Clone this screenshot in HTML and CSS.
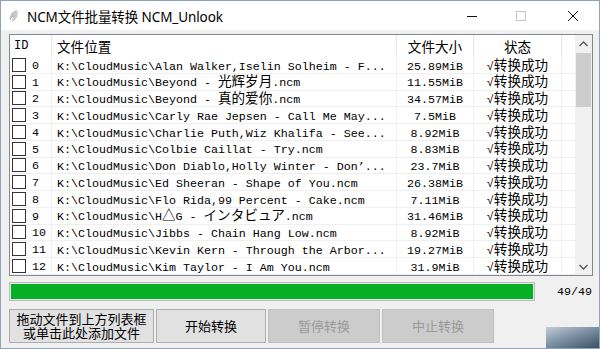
FILE: index.html
```html
<!DOCTYPE html>
<html lang="zh-CN">
<head>
    <meta charset="UTF-8">
    <title>NCM文件批量转换 NCM_Unlook</title>
    <link rel="stylesheet" href="styles.css">
</head>
<body>
    <div class="window">
        <div class="titlebar">
            <svg class="app-icon" width="12" height="14" viewBox="0 0 12 14">
                <path d="M9 1 C4 2 1 6 2 11 C3 8 5 7 7 7 C5 8 4 10 4 13 C8 11 11 7 9 1 Z" fill="#c9c9c9"/>
                <path d="M2 11 C3 8 5 7 7 7" stroke="#9a9a9a" stroke-width="0.8" fill="none"/>
            </svg>
            <span class="title">NCM文件批量转换 NCM_Unlook</span>
            <div class="controls">
                <span class="ctl"><svg width="10" height="10" viewBox="0 0 10 10"><path d="M0 5.5 H10" stroke="#111" stroke-width="1"/></svg></span>
                <span class="ctl"><svg width="10" height="10" viewBox="0 0 10 10"><rect x="0.5" y="0.5" width="9" height="9" fill="none" stroke="#c4c4c4" stroke-width="1"/></svg></span>
                <span class="ctl"><svg width="10" height="10" viewBox="0 0 10 10"><path d="M0 0 L10 10 M10 0 L0 10" stroke="#111" stroke-width="1"/></svg></span>
            </div>
        </div>

        <div class="client">
            <div class="listbox">
                <div class="list-main">
                    <div class="list-head">
                        <div class="hcell c-id mono">ID</div>
                        <div class="hcell c-path">文件位置</div>
                        <div class="hcell c-size">文件大小</div>
                        <div class="hcell c-state">状态</div>
                        <div class="hcell c-fill"></div>
                    </div>
                    <div class="list-body" id="rows"></div>
                </div>
                <div class="scrollbar">
                    <div class="sb-btn">
                        <svg width="9" height="6" viewBox="0 0 9 6"><path d="M0.5 5 L4.5 1 L8.5 5" stroke="#555" stroke-width="1.3" fill="none"/></svg>
                    </div>
                    <div class="sb-track"><div class="sb-thumb"></div></div>
                    <div class="sb-btn">
                        <svg width="9" height="6" viewBox="0 0 9 6"><path d="M0.5 1 L4.5 5 L8.5 1" stroke="#555" stroke-width="1.3" fill="none"/></svg>
                    </div>
                </div>
            </div>

            <div class="progress-row">
                <div class="progress"><div class="progress-fill" style="width: 100%"></div></div>
                <span class="count mono">49/49</span>
            </div>

            <div class="buttons">
                <button class="btn btn-add">拖动文件到上方列表框<br>或单击此处添加文件</button>
                <button class="btn btn-start">开始转换</button>
                <button class="btn btn-pause" disabled>暂停转换</button>
                <button class="btn btn-stop" disabled>中止转换</button>
            </div>
        </div>

        <div class="corner-shade"></div>
    </div>

    <script>
        // Converted files shown in the list
        const files = [
            ['K:\\CloudMusic\\Alan Walker,Iselin Solheim - F...', '25.89MiB'],
            ['K:\\CloudMusic\\Beyond - 光辉岁月.ncm', '11.55MiB'],
            ['K:\\CloudMusic\\Beyond - 真的爱你.ncm', '34.57MiB'],
            ['K:\\CloudMusic\\Carly Rae Jepsen - Call Me May...', '7.5MiB'],
            ['K:\\CloudMusic\\Charlie Puth,Wiz Khalifa - See...', '8.92MiB'],
            ['K:\\CloudMusic\\Colbie Caillat - Try.ncm', '8.83MiB'],
            ['K:\\CloudMusic\\Don Diablo,Holly Winter - Don’...', '23.7MiB'],
            ['K:\\CloudMusic\\Ed Sheeran - Shape of You.ncm', '26.38MiB'],
            ['K:\\CloudMusic\\Flo Rida,99 Percent - Cake.ncm', '7.11MiB'],
            ['K:\\CloudMusic\\H△G - インタビュア.ncm', '31.46MiB'],
            ['K:\\CloudMusic\\Jibbs - Chain Hang Low.ncm', '8.92MiB'],
            ['K:\\CloudMusic\\Kevin Kern - Through the Arbor...', '19.27MiB'],
            ['K:\\CloudMusic\\Kim Taylor - I Am You.ncm', '31.9MiB']
        ];

        // Wide (double-width) characters get their own font size
        function wide(text) {
            return text.replace(/([\u25b3\u3000-\u9fff\uff00-\uffef]+)/g, '<span class="cj">$1</span>');
        }

        const body = document.getElementById('rows');
        files.forEach(([path, size], i) => {
            const row = document.createElement('div');
            row.className = 'row';
            row.innerHTML = `
                <div class="cell c-id"><span class="check"></span><span class="mono">${i}</span></div>
                <div class="cell c-path mono">${wide(path)}</div>
                <div class="cell c-size mono">${size}</div>
                <div class="cell c-state mono">√${wide('转换成功')}</div>
                <div class="cell c-fill"></div>
            `;
            body.appendChild(row);
        });
    </script>
</body>
</html>
```

FILE: styles.css
```css
* {
    margin: 0;
    padding: 0;
    box-sizing: border-box;
}

body {
    width: 600px;
    height: 349px;
    overflow: hidden;
    background: #f0f0f0;
    font-family: "Noto Sans CJK SC", "Noto Sans", sans-serif;
    color: #000;
}

.window {
    position: relative;
    width: 600px;
    height: 349px;
    border: 1px solid #8fa3b6;
    background: #f0f0f0;
    display: flex;
    flex-direction: column;
}

/* title bar */
.titlebar {
    height: 29px;
    flex-shrink: 0;
    background: #fff;
    display: flex;
    align-items: center;
    padding-left: 7px;
}

.app-icon {
    margin-right: 7px;
}

.title {
    font-family: "Noto Sans", "Noto Sans CJK SC", sans-serif;
    font-size: 13.5px;
    letter-spacing: -0.1px;
}

.controls {
    margin-left: auto;
    display: flex;
    height: 100%;
}

.ctl {
    width: 52px;
    display: flex;
    align-items: center;
    justify-content: center;
}

.ctl:first-child {
    width: 46px;
}

/* client area */
.client {
    flex: 1;
    padding: 4px 6px 5px 8px;
    display: flex;
    flex-direction: column;
}

.mono {
    font-family: "Liberation Mono", monospace;
    font-size: 11.67px;
}

.cj {
    font-family: "Noto Sans CJK SC", "Noto Sans CJK JP", sans-serif;
    font-size: 13.6px;
    line-height: 7px;
}

.listbox {
    height: 242px;
    border: 1px solid #828790;
    background: #fff;
    display: flex;
}

.list-main {
    flex: 1;
    overflow: hidden;
}

.list-head,
.row {
    display: grid;
    grid-template-columns: 42px 345px 77px 88px 1fr;
}

.list-head {
    height: 22px;
    font-size: 13.6px;
}

.hcell {
    display: flex;
    align-items: center;
    justify-content: center;
    border-right: 1px solid #e5e5e5;
}

.hcell.c-id,
.hcell.c-path {
    justify-content: flex-start;
}

.hcell.c-id {
    padding-left: 4px;
    font-size: 12px;
}

.hcell.c-path {
    padding-left: 5px;
}

.hcell.c-fill {
    border-right: none;
}

.row {
    height: 16.75px;
    border-bottom: 1px solid #f0f0f0;
}

.cell {
    white-space: nowrap;
    overflow: hidden;
    line-height: 12.25px;
    padding-top: 3.5px;
    border-right: 1px solid #f0f0f0;
}

.cell.c-id {
    display: flex;
    align-items: center;
    padding: 0 0 0 2px;
    gap: 6px;
}

.cell.c-id .mono {
    padding-top: 2px;
}

.cell.c-path {
    padding-left: 5px;
}

.cell.c-size,
.cell.c-state {
    text-align: center;
}

.cell.c-fill {
    border-right: none;
}

.check {
    width: 14px;
    height: 14px;
    border: 1px solid #333;
    background: #fff;
    flex-shrink: 0;
}

/* vertical scrollbar */
.scrollbar {
    width: 17px;
    background: #f0f0f0;
    display: flex;
    flex-direction: column;
}

.sb-btn {
    height: 17px;
    display: flex;
    align-items: center;
    justify-content: center;
}

.sb-track {
    flex: 1;
    padding: 1px 1px;
}

.sb-thumb {
    height: 54px;
    background: #cdcdcd;
}

/* progress */
.progress-row {
    margin-top: 6px;
    display: flex;
    align-items: center;
}

.progress {
    width: 526px;
    height: 19px;
    border: 1px solid #bcbcbc;
    background: #e6e6e6;
    padding: 1px;
}

.progress-fill {
    height: 100%;
    background: #06b025;
}

.count {
    margin-left: auto;
    padding-right: 1px;
}

/* buttons */
.buttons {
    margin-top: 8px;
    display: flex;
    gap: 2px;
}

.btn {
    height: 34px;
    border: 1px solid #adadad;
    background: #e1e1e1;
    font-family: "Noto Sans CJK SC", sans-serif;
    font-size: 13px;
    line-height: 14.5px;
    color: #000;
}

.btn-add {
    width: 145px;
}

.btn-start {
    width: 110px;
}

.btn-pause,
.btn-stop {
    width: 112px;
}

.btn:disabled {
    background: #cccccc;
    border-color: #bfbfbf;
    color: #9a9a9a;
}

.corner-shade {
    position: absolute;
    right: 0;
    bottom: 0;
    width: 53px;
    height: 21px;
    background: linear-gradient(160deg, #c3ccd5 0%, #7f93a6 45%, #3c5064 100%);
}
```
